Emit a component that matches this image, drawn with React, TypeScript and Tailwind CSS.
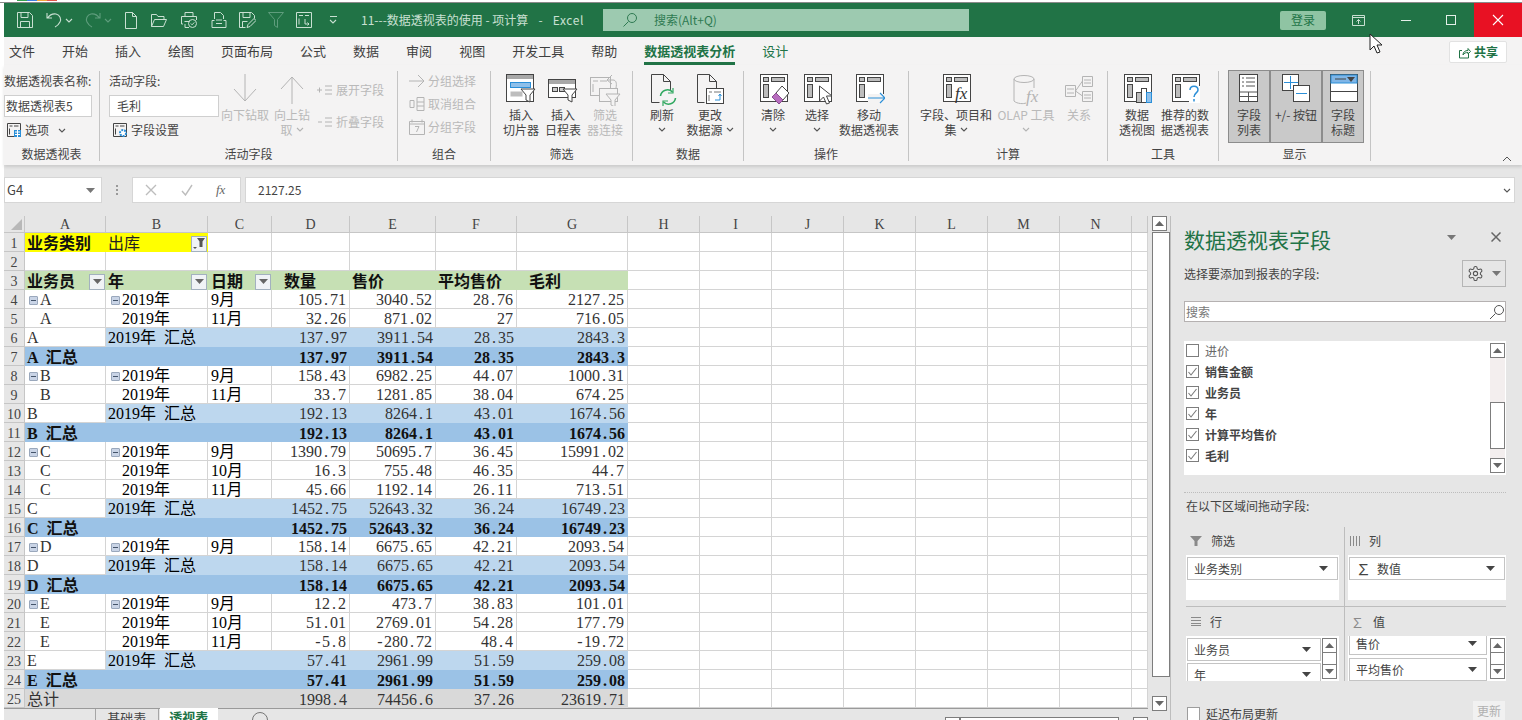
import type { ReactNode } from 'react'

const K = '#444444'
const GR = '#b4b4b4'
const BL = '#2b8fd8'

function Chev({ c = '#555555', className = '' }: { c?: string; className?: string }) {
  return (
    <svg width="8" height="5" viewBox="0 0 8 5" className={className}>
      <path d="M1 1l3 3 3-3" fill="none" stroke={c} strokeWidth="1.1" />
    </svg>
  )
}

function Tri({ c = '#555555' }: { c?: string }) {
  return (
    <svg width="9" height="5" viewBox="0 0 9 5" className="shrink-0">
      <path d="M0 0h9L4.500 5z" fill={c} />
    </svg>
  )
}

function Ico({ w = 32, h = 32, children }: { w?: number; h?: number; children: ReactNode }) {
  return (
    <svg width={w} height={h} viewBox={`0 0 ${w} ${h}`} fill="none" className="shrink-0">
      {children}
    </svg>
  )
}

// the pivot table glyph most ribbon buttons start from
function PivotBase({ c = K, fill = '#bdbdbd' }: { c?: string; fill?: string }) {
  return (
    <>
      <rect x="3.500" y="0.500" width="27" height="27" fill="#fff" stroke={c} />
      <rect x="6.500" y="3.500" width="5" height="4" fill={fill} stroke={c} />
      <rect x="14.500" y="3.500" width="13" height="4" fill={fill} stroke={c} />
      <rect x="6.500" y="10.500" width="5" height="13" fill={fill} stroke={c} />
    </>
  )
}

function TitleIcons() {
  const c = '#c9e0d2'
  const d = '#5f9d7d'
  return (
    <div className="flex items-center h-full pl-[12px]">
      <Ico w={18} h={18}>
        <path d="M1.500 1.500h12l3 3v12h-15zM5 1.500v5h7v-5M4.500 16.500v-6h9v6" stroke={c} />
      </Ico>
      <div className="ml-[11px]">
        <Ico w={18} h={18}>
          <path d="M2 2v5h5M2.500 7C5 3.500 8 2.500 11 3c4 1 5.500 5 4 8-1 2-3 4-5 5" stroke={c} strokeWidth="1.1" />
        </Ico>
      </div>
      <Chev c={c} className="ml-[2px]" />
      <div className="ml-[11px]">
        <Ico w={18} h={18}>
          <path d="M16 2v5h-5M15.500 7C13 3.500 10 2.500 7 3c-4 1-5.500 5-4 8 1 2 3 4 5 5" stroke={d} strokeWidth="1.1" />
        </Ico>
      </div>
      <Chev c={d} className="ml-[2px]" />
      <div className="ml-[10px]">
        <Ico w={18} h={18}>
          <path d="M3.500 1.500h7l4 4v12h-11zM10.500 1.500v4h4" stroke={c} />
        </Ico>
      </div>
      <div className="ml-[10px]">
        <Ico w={18} h={18}>
          <path d="M1.500 15.500v-12h5l1.500 2h6v3M1.500 15.500l3-7h12l-3 7z" stroke={c} />
        </Ico>
      </div>
      <div className="ml-[12px]">
        <Ico w={18} h={18}>
          <path d="M5 5V1.500h8V5M3 13H1.500V5.500h15V9M4.500 10.500h5M5 13v3.500h4" stroke={c} />
          <circle cx="12.500" cy="12.500" r="4" stroke={c} />
          <path d="M10.800 12.500l1.300 1.300 2.200-2.400" stroke={c} />
        </Ico>
      </div>
      <div className="ml-[12px]">
        <Ico w={18} h={18}>
          <path d="M4.500 8V1.500h6l3 3V8M2 16.500V9.500h2.500M13.500 9.500H16v7H2M6 12.500h6M6 9h6" stroke={c} />
        </Ico>
      </div>
      <div className="ml-[10px]">
        <Ico w={18} h={18}>
          <path d="M1.500 1.500h12l3 3v3M1.500 1.500v15h6M5 1.500v5h7v-5M4.500 16.500v-6h5" stroke={c} />
          <path d="M9 16.500l1-3 6-6 2 2-6 6z" stroke={c} />
        </Ico>
      </div>
      <div className="ml-[11px]">
        <Ico w={18} h={18}>
          <path d="M1.500 1.500h15l-6 7v8l-3-2v-6z" stroke={d} />
        </Ico>
      </div>
      <div className="ml-[10px]">
        <Ico w={18} h={18}>
          <path d="M1.500 1.500h15v15h-15zM4 4.500h4M10 4.500h4M4 7.500v6M10 8v5h4M12.500 11.500l1.500 1.500-1.500 1.500" stroke={c} />
        </Ico>
      </div>
      <div className="ml-[16px] flex flex-col items-center gap-[2px]">
        <div className="w-[7px] h-px bg-[#c9e0d2]" />
        <Chev c={c} />
      </div>
    </div>
  )
}

function TitleBar() {
  return (
    <div className="h-[34px] bg-[#217346] flex items-center shrink-0">
      <TitleIcons />
      <div className="ml-[24px] w-[223px] text-[12px] text-[#c9e0d2] whitespace-nowrap flex justify-between">
        <span>11---数据透视表的使用 - 项计算</span>
        <span>-</span>
        <span className="tracking-[0.6px]">Excel</span>
      </div>
      <div className="ml-[19px] w-[366px] h-[22px] bg-[#9dcab0] flex items-center pl-[19px] gap-[16px] text-[12px] text-[#2f7a52]">
        <svg width="16" height="16" viewBox="0 0 16 16" fill="none">
          <circle cx="10" cy="6" r="4.500" stroke="#2f7a52" />
          <path d="M6.500 9.500L1.500 14.500" stroke="#2f7a52" />
        </svg>
        <span>搜索(Alt+Q)</span>
      </div>
      <div className="ml-[311px] w-[46px] h-[19px] rounded-[2px] bg-[#8fc4a3] text-[12px] text-[#217346] flex items-center justify-center">登录</div>
      <div className="ml-[26px]">
        <svg width="13" height="11" viewBox="0 0 13 11" fill="none">
          <path d="M.5.5h12v10H.5zM.5 2.500h12M6.500 9V4.500M4.500 6.500l2-2 2 2" stroke="#c9e0d2" />
        </svg>
      </div>
      <div className="ml-[36px] w-[10px] h-px bg-[#e4efe9]" />
      <div className="ml-[35px] w-[10px] h-[10px] border border-[#e4efe9]" />
      <div className="ml-[18px] w-[48px] h-full bg-[#e81123] flex items-center justify-center">
        <svg width="12" height="12" viewBox="0 0 12 12">
          <path d="M1 1l10 10M11 1L1 11" stroke="#fff" strokeWidth="1.100" />
        </svg>
      </div>
    </div>
  )
}

const tabs = ['文件', '开始', '插入', '绘图', '页面布局', '公式', '数据', '审阅', '视图', '开发工具', '帮助']

function TabBar() {
  return (
    <div className="h-[28px] bg-[#f4f3f3] flex items-center pl-[5px] gap-[27px] text-[13px] text-[#3f3f3f] shrink-0">
      {tabs.map((t) => (
        <span key={t}>{t}</span>
      ))}
      <span className="relative font-bold text-[#217346]">
        数据透视表分析
        <span className="absolute left-0 right-0 top-[21px] h-[3px] bg-[#217346]" />
      </span>
      <span className="text-[#217346]">设计</span>
      <div className="ml-auto mr-[15px] w-[58px] h-[22px] mt-[2px] bg-white border border-[#e2e2e2] rounded-[2px] flex items-center justify-center gap-[3px] text-[12px] font-bold text-[#217346]">
        <svg width="13" height="13" viewBox="0 0 13 13" fill="none">
          <path d="M10.500 8v4h-9V4.500H4M5 9c0-3 2-4.500 5-4.500V2.500l2.500 3L10 8V6.500C8 6.500 6 7 5 9z" stroke="#217346" />
        </svg>
        共享
      </div>
    </div>
  )
}

function Group({ w, label, children }: { w: number; label: string; children: ReactNode }) {
  return (
    <div className="h-[90px] border-r border-[#c4c4c4] flex flex-col shrink-0" style={{ width: w }}>
      <div className="h-[76px] flex">{children}</div>
      <div className="h-[14px] leading-[14px] mt-[1px] text-center text-[12px] text-[#444]">{label}</div>
    </div>
  )
}

function Big({ w, icon, lines, chev, off }: { w: number; icon: ReactNode; lines: string[]; chev?: boolean; off?: boolean }) {
  return (
    <div className={off ? 'flex flex-col items-center shrink-0 text-[#b9b9b9]' : 'flex flex-col items-center shrink-0 text-[#444]'} style={{ width: w }}>
      <div className="h-[36px] pt-[3px] flex justify-center">{icon}</div>
      <div className="text-[12px] leading-[15px] text-center whitespace-nowrap">
        {lines.map((l, i) => (
          <div key={l} className="flex items-center justify-center gap-[3px] h-[15px]">
            {l}
            {chev && i === lines.length - 1 && l !== '' && <Chev c={off ? GR : '#555555'} />}
            {chev && l === '' && <Chev c={off ? GR : '#555555'} />}
          </div>
        ))}
      </div>
    </div>
  )
}

function Small({ icon, text, off, h = 23 }: { icon: ReactNode; text: string; off?: boolean; h?: number }) {
  return (
    <div className={off ? 'flex items-center gap-[3px] text-[12px] text-[#b9b9b9] whitespace-nowrap' : 'flex items-center gap-[3px] text-[12px] text-[#444] whitespace-nowrap'} style={{ height: h }}>
      {icon}
      {text}
    </div>
  )
}

function FieldBox({ text, className }: { text: string; className: string }) {
  return <div className={`h-[22px] bg-white border border-[#cfcfcf] text-[12px] text-[#444] leading-[20px] ${className}`}>{text}</div>
}

function Funnel({ x, y, c = K, fill = '#fff' }: { x: number; y: number; c?: string; fill?: string }) {
  return <path d={`M${x} ${y}h14l-5 6v7l-4 -2v-5z`} fill={fill} stroke={c} />
}

function Ribbon() {
  return (
    <div className="h-[100px] bg-[#f4f3f3] flex pt-[6px] shrink-0 shadow-[0_2px_3px_rgba(0,0,0,0.12)] relative">
      <Group w={96} label="数据透视表">
        <div className="flex flex-col text-[12px] text-[#444] whitespace-nowrap">
          <div className="h-[18px] mt-[1px]">数据透视表名称:</div>
          <FieldBox text="数据透视表5" className="w-[88px] mt-[5px] pl-[1px]" />
          <div className="flex items-center gap-[3px] mt-[3px] pl-[2px] h-[20px]">
            <Ico w={16} h={16}>
              <path d="M1.500 1.500h13v13h-13zM3.500 4h3M8 4h4.500M3.500 6.500v6" stroke={K} />
              <rect x="8" y="8" width="7" height="7" fill="#2b8fd8" />
              <path d="M9 10h5M9 12.500h5M11.500 8v7" stroke="#fff" />
            </Ico>
            选项
            <Chev className="ml-[6px]" />
          </div>
        </div>
      </Group>
      <Group w={298} label="活动字段">
        <div className="flex flex-col w-[120px] pl-[9px] text-[12px] text-[#444] whitespace-nowrap">
          <div className="h-[18px] mt-[1px]">活动字段:</div>
          <FieldBox text="毛利" className="w-[110px] mt-[5px] pl-[7px]" />
          <div className="flex items-center gap-[3px] mt-[3px] pl-[3px] h-[20px]">
            <Ico w={16} h={16}>
              <path d="M1.500 1.500h13v13h-13zM3.500 4h3M8 4h4.500M3.500 6.500v6" stroke={K} />
              <circle cx="11" cy="11" r="3" fill="#fff" stroke="#2b8fd8" strokeWidth="2" strokeDasharray="2 1" />
            </Ico>
            字段设置
          </div>
        </div>
        <Big
          off
          w={50}
          lines={['向下钻取']}
          icon={
            <Ico w={28} h={30}>
              <path d="M14 0v27M3 15l11 12 11-12" stroke={GR} />
            </Ico>
          }
        />
        <Big
          off
          w={44}
          chev
          lines={['向上钻', '取']}
          icon={
            <Ico w={28} h={30}>
              <path d="M14 30V3M3 15L14 3l11 12" stroke={GR} />
            </Ico>
          }
        />
        <div className="flex flex-col pl-[3px] pt-[7px] gap-[9px]">
          <Small
            off
            text="展开字段"
            icon={
              <Ico w={16} h={14}>
                <path d="M0 7h5M2.500 4.500v5M8 3h7M8 7h7M8 11h7" stroke={GR} />
              </Ico>
            }
          />
          <Small
            off
            text="折叠字段"
            icon={
              <Ico w={16} h={14}>
                <path d="M1 7h4M8 3h7M8 7h7M8 11h7" stroke={GR} />
              </Ico>
            }
          />
        </div>
      </Group>
      <Group w={93} label="组合">
        <div className="flex flex-col pl-[11px] mt-[-2px]">
          <Small
            off
            text="分组选择"
            icon={
              <Ico w={16} h={14}>
                <path d="M0 7h15M9 1l6 6-6 6" stroke={GR} />
              </Ico>
            }
          />
          <Small
            off
            text="取消组合"
            icon={
              <Ico w={16} h={14}>
                <path d="M1 3.500h4v7H1zM8 .5h7v13H8zM8 5h7M8 9h7" stroke={GR} />
              </Ico>
            }
          />
          <Small
            off
            text="分组字段"
            icon={
              <Ico w={16} h={16}>
                <path d="M.5 2.500h15v13H.5zM3 .5v3M13 .5v3M.5 5h15M6 7.500h4L7.500 13" stroke={GR} />
              </Ico>
            }
          />
        </div>
      </Group>
      <Group w={142} label="筛选">
        <div className="flex pl-[9px]">
          <Big
            w={42}
            lines={['插入', '切片器']}
            icon={
              <Ico>
                <rect x="1.500" y="0.500" width="27" height="27" fill="#fff" stroke={K} />
                <rect x="2" y="1" width="26" height="4" fill="#a8a8a8" />
                <rect x="5.500" y="8.500" width="20" height="5" fill="#8fc0ea" stroke={BL} />
                <rect x="5.500" y="17.500" width="12" height="5" fill="#bdbdbd" />
                <Funnel x={16} y={15} />
              </Ico>
            }
          />
          <Big
            w={42}
            lines={['插入', '日程表']}
            icon={
              <Ico>
                <rect x="1.500" y="5.500" width="27" height="18" fill="#fff" stroke={K} />
                <rect x="2" y="6" width="26" height="4" fill="#a8a8a8" />
                <rect x="5.500" y="13.500" width="5" height="4" fill="#ccc" stroke={K} />
                <rect x="12.500" y="13.500" width="5" height="4" fill="#ccc" stroke={K} />
                <Funnel x={16} y={15} />
              </Ico>
            }
          />
          <Big
            off
            w={42}
            lines={['筛选', '器连接']}
            icon={
              <Ico>
                <rect x="1.500" y="3.500" width="20" height="18" stroke={GR} />
                <path d="M4 7h5M11 7h7M4 10v8" stroke={GR} />
                <path d="M18 6l5-5M18 6l5 4M19 6h5c3 0 4 3 3 8" stroke={GR} />
                <rect x="10.500" y="14.500" width="18" height="13" fill="#f4f3f3" stroke={GR} />
                <Funnel x={17} y={20} c={GR} fill="#f4f3f3" />
              </Ico>
            }
          />
        </div>
      </Group>
      <Group w={111} label="数据">
        <div className="flex pl-[5px]">
          <Big
            w={48}
            chev
            lines={['刷新', '']}
            icon={
              <Ico>
                <path d="M5.500 28.500V.5h12l7 7v9M5.500 28.500h8M17.500 .5v7h7" stroke={K} />
                <path d="M14.500 22a7 7 0 0112-4M29.500 24a7 7 0 01-12 4" stroke="#30a860" strokeWidth="1.600" />
                <path d="M27 14v5h-5M17 32v-5h5" stroke="#30a860" strokeWidth="1.200" />
              </Ico>
            }
          />
          <Big
            w={48}
            chev
            lines={['更改', '数据源']}
            icon={
              <Ico>
                <path d="M3.500 28.500V.5h12l7 7v7M3.500 28.500h7M15.500 .5v7h7" stroke={K} />
                <rect x="12.500" y="14.500" width="17" height="15" fill="#fff" stroke={K} />
                <path d="M15 18h3M20 18h7M15 21v6" stroke="#777" />
                <path d="M26 20v6h-5M24.500 22l1.500-2 1.500 2" stroke={BL} />
              </Ico>
            }
          />
        </div>
      </Group>
      <Group w={165} label="操作">
        <div className="flex pl-[7px]">
          <Big
            w={44}
            chev
            lines={['清除', '']}
            icon={
              <Ico>
                <PivotBase />
                <path d="M25 12l7 7-6 7-7-7z" fill="#fff" stroke={K} />
                <path d="M19 19l7 7-4 4-7-7z" fill="#b76cbe" stroke="#8a4f90" />
              </Ico>
            }
          />
          <Big
            w={44}
            chev
            lines={['选择', '']}
            icon={
              <Ico>
                <PivotBase />
                <path d="M18.500 12v15l4-4 3 7 3-1-3-7h5.500z" fill="#fff" stroke={K} />
              </Ico>
            }
          />
          <Big
            w={60}
            lines={['移动', '数据透视表']}
            icon={
              <Ico>
                <PivotBase />
                <rect x="15" y="20" width="17" height="9" fill="#f4f3f3" />
                <path d="M15 24h17M27 19l5 5-5 5" stroke={BL} strokeWidth="1.200" fill="none" />
              </Ico>
            }
          />
        </div>
      </Group>
      <Group w={199} label="计算">
        <div className="flex pl-[9px]">
          <Big
            w={76}
            chev
            lines={['字段、项目和', '集']}
            icon={
              <Ico>
                <PivotBase />
                <text x="15" y="25" fontFamily="Liberation Serif, serif" fontStyle="italic" fontSize="17" fill="#333">
                  fx
                </text>
              </Ico>
            }
          />
          <Big
            off
            w={64}
            chev
            lines={['OLAP 工具', '']}
            icon={
              <Ico>
                <ellipse cx="14" cy="5" rx="10" ry="3.500" stroke={GR} />
                <path d="M4 5v22c3 3 10 3 12 2M24 5v9" stroke={GR} />
                <text x="16" y="28" fontFamily="Liberation Serif, serif" fontStyle="italic" fontSize="17" fill={GR}>
                  fx
                </text>
              </Ico>
            }
          />
          <Big
            off
            w={42}
            lines={['关系']}
            icon={
              <Ico>
                <path d="M2.500 11.500h10v11h-10zM19.500 2.500h10v10h-10zM19.500 17.500h10v10h-10zM12.500 17l7-10M12.500 17l7 5M4 15h7M4 19h7M21 6h7M21 9h7M21 21h7M21 24h7" stroke={GR} />
              </Ico>
            }
          />
        </div>
      </Group>
      <Group w={111} label="工具">
        <div className="flex pl-[6px]">
          <Big
            w={46}
            lines={['数据', '透视图']}
            icon={
              <Ico>
                <PivotBase />
                <rect x="15.500" y="18.500" width="5" height="10" fill="#bdbdbd" stroke={K} />
                <rect x="20.500" y="14.500" width="5" height="14" fill="#fff" stroke={K} />
                <rect x="25.500" y="18.500" width="5" height="10" fill="#8fc0ea" stroke={BL} />
              </Ico>
            }
          />
          <Big
            w={50}
            lines={['推荐的数', '据透视表']}
            icon={
              <Ico>
                <PivotBase />
                <rect x="20" y="12" width="11" height="17" fill="#fff" />
                <path d="M21 16c0-5 8-5 8 0 0 3-4 3-4 7M25 25v2.500" stroke={BL} strokeWidth="1.500" />
              </Ico>
            }
          />
        </div>
      </Group>
      <Group w={152} label="显示">
        <div className="flex pl-[9px] h-[73px] mt-[-1px]">
          <Toggle w={42} lines={['字段', '列表']}>
            <Ico>
              <rect x="6.500" y="0.500" width="18" height="27" fill="#fff" stroke={K} />
              <path d="M9 4h2M13 4h9M9 8h2M13 8h9M9 12h2M13 12h9M7 18h17M7 22.500h17M15.500 18v9" stroke="#555" />
            </Ico>
          </Toggle>
          <Toggle w={52} lines={['+/- 按钮']}>
            <Ico>
              <rect x="2.500" y="0.500" width="16" height="16" fill="#fff" stroke={K} />
              <path d="M4 8.500h14M10.500 2v13" stroke={BL} />
              <rect x="13.500" y="11.500" width="16" height="16" fill="#fff" stroke={K} />
              <path d="M16 19.500h11" stroke={BL} />
            </Ico>
          </Toggle>
          <Toggle w={42} lines={['字段', '标题']}>
            <Ico>
              <rect x="3.500" y="0.500" width="27" height="27" fill="#fff" stroke={K} />
              <rect x="4" y="1" width="26" height="8" fill="#7fb5e6" stroke={BL} />
              <path d="M8 5h11" stroke={K} />
              <path d="M20 3h8l-4 5z" fill={K} />
              <path d="M3.500 17.500h27" stroke={K} />
            </Ico>
          </Toggle>
        </div>
      </Group>
      <div className="flex-1 flex justify-end items-end pb-[3px] pr-[10px]">
        <svg width="10" height="6" viewBox="0 0 10 6">
          <path d="M1 5l4-4 4 4" fill="none" stroke="#555" />
        </svg>
      </div>
    </div>
  )
}

function Toggle({ w, lines, children }: { w: number; lines: string[]; children: ReactNode }) {
  return (
    <div className="h-[73px] bg-[#c9c9c9] border border-[#8c8c8c] flex flex-col items-center text-[12px] leading-[15px] text-[#444] whitespace-nowrap shrink-0" style={{ width: w }}>
      <div className="h-[36px] pt-[3px]">{children}</div>
      {lines.map((l) => (
        <div key={l}>{l}</div>
      ))}
    </div>
  )
}

function FormulaBar() {
  return (
    <div className="h-[51px] bg-[#e6e6e6] flex items-start pt-[12px] shrink-0">
      <div className="w-[98px] h-[26px] bg-white border border-[#d6d6d6] flex items-center justify-between px-[2px] pr-[6px] text-[13px] text-[#444]">
        G4
        <Tri c="#777" />
      </div>
      <div className="w-[30px] h-[26px] flex items-center justify-center text-[#999] text-[11px]">
        <div className="flex flex-col gap-[2px]">
          <div className="w-[2px] h-[2px] bg-[#999]" />
          <div className="w-[2px] h-[2px] bg-[#999]" />
          <div className="w-[2px] h-[2px] bg-[#999]" />
        </div>
      </div>
      <div className="w-[109px] h-[26px] bg-white border border-[#d6d6d6] flex items-center pl-[12px] gap-[24px]">
        <svg width="12" height="12" viewBox="0 0 12 12">
          <path d="M1 1l10 10M11 1L1 11" stroke="#bdbdbd" strokeWidth="1.400" />
        </svg>
        <svg width="12" height="12" viewBox="0 0 12 12">
          <path d="M1 7l3.500 4L11 1" fill="none" stroke="#bdbdbd" strokeWidth="1.400" />
        </svg>
        <span className="font-['Liberation_Serif',serif] italic text-[13px] text-[#666] ml-[-1px]">fx</span>
      </div>
      <div className="ml-[4px] w-[1270px] h-[26px] bg-white border border-[#d6d6d6] flex items-center justify-between pl-[12px] pr-[3px] text-[12px] text-[#444]">
        2127.25
        <Chev />
      </div>
    </div>
  )
}

type Kind = 'plain' | 'sub' | 'total' | 'grand'
type Row = { kind: Kind; a?: string; b?: string; c?: string; n?: string[]; fold?: boolean; indent?: boolean }

const y19 = '2019年'
const rows: Row[] = [
  { kind: 'plain', a: 'A', b: y19, c: '9月', n: ['105.71', '3040.52', '28.76', '2127.25'], fold: true },
  { kind: 'plain', a: 'A', b: y19, c: '11月', n: ['32.26', '871.02', '27', '716.05'], indent: true },
  { kind: 'sub', a: 'A', b: '2019年 汇总', n: ['137.97', '3911.54', '28.35', '2843.3'] },
  { kind: 'total', a: 'A 汇总', n: ['137.97', '3911.54', '28.35', '2843.3'] },
  { kind: 'plain', a: 'B', b: y19, c: '9月', n: ['158.43', '6982.25', '44.07', '1000.31'], fold: true },
  { kind: 'plain', a: 'B', b: y19, c: '11月', n: ['33.7', '1281.85', '38.04', '674.25'], indent: true },
  { kind: 'sub', a: 'B', b: '2019年 汇总', n: ['192.13', '8264.1', '43.01', '1674.56'] },
  { kind: 'total', a: 'B 汇总', n: ['192.13', '8264.1', '43.01', '1674.56'] },
  { kind: 'plain', a: 'C', b: y19, c: '9月', n: ['1390.79', '50695.7', '36.45', '15991.02'], fold: true },
  { kind: 'plain', a: 'C', b: y19, c: '10月', n: ['16.3', '755.48', '46.35', '44.7'], indent: true },
  { kind: 'plain', a: 'C', b: y19, c: '11月', n: ['45.66', '1192.14', '26.11', '713.51'], indent: true },
  { kind: 'sub', a: 'C', b: '2019年 汇总', n: ['1452.75', '52643.32', '36.24', '16749.23'] },
  { kind: 'total', a: 'C 汇总', n: ['1452.75', '52643.32', '36.24', '16749.23'] },
  { kind: 'plain', a: 'D', b: y19, c: '9月', n: ['158.14', '6675.65', '42.21', '2093.54'], fold: true },
  { kind: 'sub', a: 'D', b: '2019年 汇总', n: ['158.14', '6675.65', '42.21', '2093.54'] },
  { kind: 'total', a: 'D 汇总', n: ['158.14', '6675.65', '42.21', '2093.54'] },
  { kind: 'plain', a: 'E', b: y19, c: '9月', n: ['12.2', '473.7', '38.83', '101.01'], fold: true },
  { kind: 'plain', a: 'E', b: y19, c: '10月', n: ['51.01', '2769.01', '54.28', '177.79'], indent: true },
  { kind: 'plain', a: 'E', b: y19, c: '11月', n: ['-5.8', '-280.72', '48.4', '-19.72'], indent: true },
  { kind: 'sub', a: 'E', b: '2019年 汇总', n: ['57.41', '2961.99', '51.59', '259.08'] },
  { kind: 'total', a: 'E 汇总', n: ['57.41', '2961.99', '51.59', '259.08'] },
  { kind: 'grand', a: '总计', n: ['1998.4', '74456.6', '37.26', '23619.71'] },
]

const letters = ['A', 'B', 'C', 'D', 'E', 'F', 'G', 'H', 'I', 'J', 'K', 'L', 'M', 'N', '']
const emptyCols = [0, 1, 2, 3, 4, 5, 6, 7]

const line = 'border-r border-b border-[#d4d4d4]'
const wrap = 'h-[19px] pt-[2px] flex items-center overflow-hidden whitespace-nowrap'

function RowHead({ n }: { n: number }) {
  return (
    <div className="h-[19px] pt-[2px] bg-[#e6e6e6] border-r border-b border-[#c6c6c6] flex items-center justify-center text-[14px] text-[#444]">{n}</div>
  )
}

function Fold() {
  return (
    <span className="w-[9px] h-[9px] mr-[2px] rounded-[1px] bg-[#c9d4e6] border border-[#9aa8bc] flex items-center justify-center shrink-0">
      <span className="w-[5px] h-px bg-[#44546a]" />
    </span>
  )
}

function FilterBtn({ funnel }: { funnel?: boolean }) {
  return (
    <span className="w-[16px] h-[16px] bg-[#f0f3f6] border border-[#a3b1bf] flex items-center justify-center shrink-0">
      {funnel ? (
        <svg width="12" height="11" viewBox="0 0 12 11">
          <path d="M4 0h8L9.500 3.500V9h-3V3.500zM0 9h4L2 11z" fill="#555" />
        </svg>
      ) : (
        <Tri c="#666" />
      )}
    </span>
  )
}

function Num({ v }: { v: string }) {
  return (
    <>
      {v.split('').map((ch, i) =>
        ch === '.' || ch === '-' ? (
          <span key={i} className="inline-block w-[8px] text-center">
            {ch}
          </span>
        ) : (
          <span key={i}>{ch}</span>
        ),
      )}
    </>
  )
}

function DataRow({ r, n }: { r: Row; n: number }) {
  const bgB = r.kind === 'sub' ? 'bg-[#bdd7ee]' : r.kind === 'total' ? 'bg-[#9bc2e6]' : r.kind === 'grand' ? 'bg-[#d9d9d9]' : 'bg-white'
  const bgA = r.kind === 'total' ? 'bg-[#9bc2e6]' : r.kind === 'grand' ? 'bg-[#d9d9d9]' : 'bg-white'
  const edge = r.kind === 'plain' ? line : r.kind === 'sub' ? 'border-b border-[#bdd7ee]' : ''
  const bold = r.kind === 'total' ? 'font-bold text-[#111]' : 'text-[#333]'
  return (
    <>
      <RowHead n={n} />
      <div className={`${wrap} ${bgA} ${r.kind === 'sub' ? line : edge} ${bold} ${r.fold ? 'pl-[4px]' : r.indent ? 'pl-[15px]' : 'pl-[2px]'} ${r.kind === 'total' ? 'overflow-visible' : ''}`}>
        {r.fold && <Fold />}
        {r.a}
      </div>
      <div className={`${wrap} ${bgB} ${edge} ${r.fold ? 'pl-[5px]' : r.indent ? 'pl-[16px]' : 'pl-[2px]'}`}>
        {r.fold && <Fold />}
        {r.b}
      </div>
      <div className={`${wrap} ${bgB} ${edge} pl-[3px]`}>{r.c}</div>
      {r.n?.map((v, i) => (
        <div key={i} className={`${wrap} ${bgB} ${edge} ${bold} justify-end pr-[3px]`}>
          <Num v={v} />
        </div>
      ))}
      {emptyCols.map((c) => (
        <div key={c} className={`bg-white ${line}`} />
      ))}
    </>
  )
}

function Sheet() {
  return (
    <div className="grid grid-cols-[21px_81px_102px_64px_78px_86px_81px_111px_72px_72px_72px_72px_72px_72px_72px_16px] w-[1144px] font-['Liberation_Serif','Noto_Sans_CJK_SC',serif] text-[16px] [word-spacing:4px] shrink-0">
      <div className="h-[17px] bg-[#e6e6e6] border-r border-b border-[#c6c6c6] flex items-end justify-end p-[2px]">
        <svg width="11" height="11" viewBox="0 0 11 11">
          <path d="M11 0v11H0z" fill="#b8b8b8" />
        </svg>
      </div>
      {letters.map((l, i) => (
        <div key={i} className="h-[17px] pt-[1px] bg-[#e6e6e6] border-r border-b border-[#c6c6c6] flex items-center justify-center text-[14px] text-[#444]">
          {l}
        </div>
      ))}
      <RowHead n={1} />
      <div className={`${wrap} bg-[#ffff00] pl-[2px] font-bold text-[#111]`}>业务类别</div>
      <div className={`${wrap} bg-[#ffff00] pl-[2px] pr-[1px] justify-between text-[#222]`}>
        出库
        <FilterBtn funnel />
      </div>
      {[0, 1, 2, 3, 4, 5, 6, 7, 8, 9, 10, 11, 12].map((c) => (
        <div key={c} className={`bg-white ${line}`} />
      ))}
      <RowHead n={2} />
      {[0, 1, 2, 3, 4, 5, 6, 7, 8, 9, 10, 11, 12, 13, 14].map((c) => (
        <div key={c} className={`bg-white ${line}`} />
      ))}
      <RowHead n={3} />
      <div className={`${wrap} bg-[#c6e0b4] pl-[2px] pr-[1px] justify-between font-bold text-[#111]`}>
        业务员
        <FilterBtn />
      </div>
      <div className={`${wrap} bg-[#c6e0b4] pl-[2px] pr-[1px] justify-between font-bold text-[#111]`}>
        年
        <FilterBtn />
      </div>
      <div className={`${wrap} bg-[#c6e0b4] pl-[3px] pr-[1px] justify-between font-bold text-[#111]`}>
        日期
        <FilterBtn />
      </div>
      <div className={`${wrap} bg-[#c6e0b4] pl-[12px] font-bold text-[#111]`}>数量</div>
      <div className={`${wrap} bg-[#c6e0b4] pl-[2px] font-bold text-[#111]`}>售价</div>
      <div className={`${wrap} bg-[#c6e0b4] pl-[2px] font-bold text-[#111]`}>平均售价</div>
      <div className={`${wrap} bg-[#c6e0b4] pl-[12px] font-bold text-[#111]`}>毛利</div>
      {emptyCols.map((c) => (
        <div key={c} className={`bg-white ${line}`} />
      ))}
      {rows.map((r, i) => (
        <DataRow key={i} r={r} n={i + 4} />
      ))}
    </div>
  )
}

function ScrollBtn({ up }: { up?: boolean }) {
  return (
    <div className="w-[15px] h-[15px] bg-white border border-[#7d7d7d] flex items-center justify-center shrink-0">
      <svg width="9" height="5" viewBox="0 0 9 5">
        <path d={up ? 'M0 5h9L4.500 0z' : 'M0 0h9L4.500 5z'} fill="#666" />
      </svg>
    </div>
  )
}

function SheetFooter() {
  return (
    <div className="h-[12px] bg-[#e6e6e6] flex text-[13px] shrink-0 border-t border-[#9a9a9a]">
      <div className="ml-[91px] w-[64px] h-[20px] border-x border-[#a6a6a6] text-center text-[#444] leading-[17px]">基础表</div>
      <div className="ml-[1px] w-[59px] h-[20px] bg-white text-center font-bold text-[#217346] leading-[17px] mt-[-1px]">透视表</div>
      <div className="ml-[34px] mt-[3px] w-[16px] h-[16px] rounded-full border border-[#777]" />
      <div className="ml-[677px] mt-[8px] w-[204px] h-[12px] flex">
        <div className="w-[15px] h-[12px] bg-white border border-[#7d7d7d]" />
        <div className="w-[159px] h-[12px] bg-white border border-[#7d7d7d]" />
        <div className="w-[15px] h-[12px] ml-[14px] bg-white border border-[#7d7d7d]" />
      </div>
    </div>
  )
}

const fields = [
  { t: '进价', on: false },
  { t: '销售金额', on: true },
  { t: '业务员', on: true },
  { t: '年', on: true },
  { t: '计算平均售价', on: true },
  { t: '毛利', on: true },
]

function Check({ on }: { on: boolean }) {
  return (
    <span className="w-[13px] h-[13px] bg-white border border-[#7d7d7d] flex items-center justify-center shrink-0">
      {on && (
        <svg width="11" height="11" viewBox="0 0 11 11">
          <path d="M1.500 6l2.500 3 5.500-7" fill="none" stroke="#7a7a7a" strokeWidth="1.100" />
        </svg>
      )}
    </span>
  )
}

function AreaItem({ text, w, sigma }: { text: string; w: number; sigma?: boolean }) {
  return (
    <div className="h-[23px] shrink-0 bg-white border border-[#c4c4c4] flex items-center justify-between pl-[6px] pr-[9px] text-[12px] text-[#444]" style={{ width: w }}>
      <span className="flex items-center gap-[6px]">
        {sigma && <span className="text-[15px] leading-none text-[#444]">∑</span>}
        {text}
      </span>
      <Tri c="#444" />
    </div>
  )
}

function MiniScroll() {
  return (
    <div className="w-[15px] flex flex-col shrink-0">
      <ScrollBtn up />
      <div className="h-[11px] border-x border-[#7d7d7d] w-[15px]" />
      <ScrollBtn />
    </div>
  )
}

function Panel() {
  return (
    <div className="w-[352px] h-[504px] bg-[#e6e6e6] border-l border-[#bdbdbd] text-[12px] text-[#444] shrink-0 overflow-hidden pl-[13px] pr-[16px]">
      <div className="h-[27px] mt-[10px] flex items-center justify-between">
        <span className="text-[21px] text-[#217346] leading-none whitespace-nowrap">数据透视表字段</span>
        <span className="flex items-center gap-[35px] pr-[5px] mt-[-5px]">
          <Tri c="#777" />
          <svg width="10" height="10" viewBox="0 0 10 10">
            <path d="M.5.5l9 9M9.500.5l-9 9" stroke="#666" strokeWidth="1.500" />
          </svg>
        </span>
      </div>
      <div className="flex items-center justify-between mt-[7px] h-[27px]">
        <span className="pt-[1px]">选择要添加到报表的字段:</span>
        <span className="w-[44px] h-[27px] border border-[#b5b5b5] flex items-center justify-center gap-[8px]">
          <svg width="17" height="17" viewBox="0 0 24 24" fill="none" stroke="#555" strokeWidth="1.500">
            <path d="M12.220 2h-.44a2 2 0 0 0-2 2v.18a2 2 0 0 1-1 1.730l-.43.25a2 2 0 0 1-2 0l-.15-.08a2 2 0 0 0-2.730.73l-.22.38a2 2 0 0 0 .73 2.730l.15.1a2 2 0 0 1 1 1.720v.51a2 2 0 0 1-1 1.740l-.15.09a2 2 0 0 0-.73 2.730l.22.38a2 2 0 0 0 2.730.73l.15-.08a2 2 0 0 1 2 0l.43.25a2 2 0 0 1 1 1.730V20a2 2 0 0 0 2 2h.44a2 2 0 0 0 2-2v-.18a2 2 0 0 1 1-1.730l.43-.25a2 2 0 0 1 2 0l.15.08a2 2 0 0 0 2.730-.73l.22-.39a2 2 0 0 0-.73-2.730l-.15-.08a2 2 0 0 1-1-1.740v-.5a2 2 0 0 1 1-1.740l.15-.09a2 2 0 0 0 .73-2.730l-.22-.38a2 2 0 0 0-2.730-.73l-.15.08a2 2 0 0 1-2 0l-.43-.25a2 2 0 0 1-1-1.730V4a2 2 0 0 0-2-2z" />
            <circle cx="12" cy="12" r="3" />
          </svg>
          <Tri c="#777" />
        </span>
      </div>
      <div className="mt-[14px] h-[21px] bg-white border border-[#b5b1b1] flex items-center justify-between pl-[1px] text-[#777]">
        搜索
        <svg width="16" height="16" viewBox="0 0 16 16" fill="none">
          <circle cx="10" cy="6" r="4.500" stroke="#555" />
          <path d="M6.500 9.500L1 15" stroke="#555" />
        </svg>
      </div>
      <div className="mt-[19px] h-[134px] bg-white flex justify-between">
        <div className="pl-[2px] flex flex-col mt-[-1px]">
          {fields.map((f) => (
            <div key={f.t} className={f.on ? 'h-[21px] flex items-center gap-[6px] font-bold text-[#444]' : 'h-[21px] flex items-center gap-[6px] text-[#666]'}>
              <Check on={f.on} />
              {f.t}
            </div>
          ))}
        </div>
        <div className="w-[15px] mr-[1px] mt-[2px] flex flex-col">
          <ScrollBtn up />
          <div className="h-[44px] bg-[#f3eeee]" />
          <div className="h-[47px] bg-white border border-[#7d7d7d]" />
          <div className="h-[9px] bg-[#f3eeee]" />
          <ScrollBtn />
        </div>
      </div>
      <div className="mt-[17px] h-px border-t border-dotted border-[#bdbdbd]" />
      <div className="mt-[4px] h-[16px] pl-[2px]">在以下区域间拖动字段:</div>
      <div className="mt-[14px] ml-[2px] grid grid-cols-[159px_161px] text-[#444]">
        <div className="border-r border-[#bdbdbd] pr-[5px]">
          <div className="h-[28px] flex items-center gap-[9px] pl-[4px]">
            <svg width="12" height="12" viewBox="0 0 12 12">
              <path d="M0 1h12L7.500 6v5h-3V6z" fill="#8a8a8a" />
            </svg>
            筛选
          </div>
          <div className="h-[45px] bg-white pt-[2px] px-[1px]">
            <AreaItem text="业务类别" w={151} />
          </div>
          <div className="h-[6px]" />
        </div>
        <div className="pl-[3px]">
          <div className="h-[28px] flex items-center gap-[9px] pl-[2px]">
            <svg width="10" height="10" viewBox="0 0 10 10">
              <path d="M.5 0v10M3.500 0v10M6.500 0v10M9.500 0v10" stroke="#8a8a8a" />
            </svg>
            列
          </div>
          <div className="h-[45px] bg-white pt-[2px] px-[1px]">
            <AreaItem text="数值" w={156} sigma />
          </div>
        </div>
        <div className="border-r border-t border-[#bdbdbd] pr-[5px]">
          <div className="h-[29px] flex items-center gap-[9px] pl-[5px]">
            <svg width="10" height="9" viewBox="0 0 10 9">
              <path d="M0 .5h10M0 3.500h10M0 6.500h10M0 8.500h10" stroke="#8a8a8a" />
            </svg>
            行
          </div>
          <div className="h-[45px] bg-white flex pt-[2px] pl-[1px] overflow-hidden">
            <div className="w-[135px] flex flex-col gap-[2px] shrink-0">
              <AreaItem text="业务员" w={134} />
              <AreaItem text="年" w={134} />
            </div>
            <MiniScroll />
          </div>
        </div>
        <div className="border-t border-[#bdbdbd] pl-[3px]">
          <div className="h-[29px] flex items-center gap-[9px] pl-[3px]">
            <span className="text-[13px] leading-none text-[#8a8a8a]">∑</span>
            值
          </div>
          <div className="h-[45px] bg-white flex overflow-hidden justify-between pr-[1px]">
            <div className="flex flex-col gap-[3px] mt-[-4px] pl-[1px]">
              <AreaItem text="售价" w={138} />
              <AreaItem text="平均售价" w={138} />
            </div>
            <div className="pt-[2px]">
              <MiniScroll />
            </div>
          </div>
        </div>
      </div>
      <div className="mt-[18px] flex items-start justify-between pl-[3px] pr-[1px]">
        <div className="flex items-center gap-[6px] mt-[6px]">
          <span className="w-[13px] h-[14px] bg-white border border-[#9d9d9d]" />
          延迟布局更新
        </div>
        <div className="w-[32px] h-[20px] mt-[2px] bg-[#f1f1f1] text-center text-[#b0b0b0] leading-[20px]">更新</div>
      </div>
    </div>
  )
}

export default function App() {
  return (
    <div className="relative w-[1522px] h-[720px] overflow-hidden bg-white font-['Noto_Sans_CJK_SC','Noto_Sans',sans-serif]">
      <div className="h-[3px] flex bg-white border-b border-[#8a8a8a]">
        <div className="ml-[17px] w-[10px] h-[1px] bg-[#37a24f]" />
        <div className="w-[10px] h-[1px] bg-[#3f7fe0]" />
        <div className="w-[10px] h-[1px] bg-[#f0a63a]" />
        <div className="w-[10px] h-[1px] bg-[#e0564a]" />
      </div>
      <div className="flex">
        <div className="w-[4px] h-[717px] bg-white shrink-0" />
        <div className="w-[1518px] flex flex-col">
          <TitleBar />
          <TabBar />
          <Ribbon />
          <FormulaBar />
          <div className="flex bg-[#e6e6e6]">
            <div className="w-[1144px] shrink-0">
              <Sheet />
              <SheetFooter />
            </div>
            <div className="w-[22px] pl-[4px] flex flex-col shrink-0">
              <ScrollBtn up />
              <div className="h-[445px] bg-white border border-[#7d7d7d] mt-[1px]" />
              <div className="h-[19px]" />
              <ScrollBtn />
            </div>
            <Panel />
          </div>
        </div>
      </div>
      <svg width="14" height="21" viewBox="0 0 14 21" className="absolute left-[1369px] top-[33px]">
        <path d="M1 1v16l4-4 3 7 3-1-3-7h5z" fill="#fff" stroke="#222" />
      </svg>
    </div>
  )
}
